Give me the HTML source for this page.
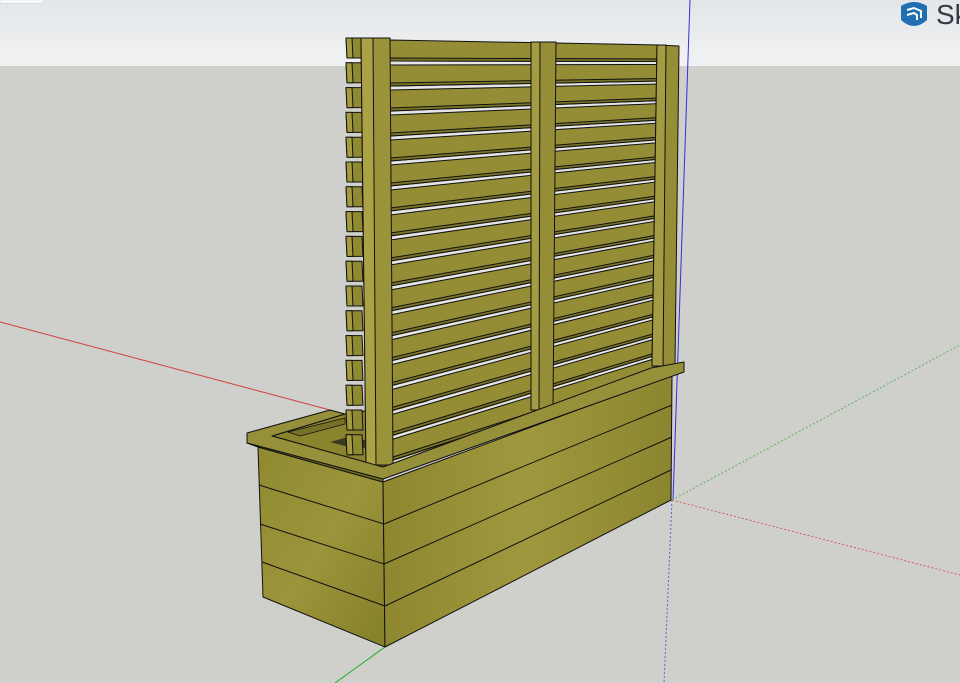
<!DOCTYPE html>
<html><head><style>
html,body{margin:0;padding:0;width:960px;height:683px;overflow:hidden;background:#cfcfcb}
svg{display:block}
</style></head><body>
<svg id="s" width="960" height="683" viewBox="0 0 960 683" xmlns="http://www.w3.org/2000/svg">
<defs>
<linearGradient id="sky" x1="0" y1="0" x2="0" y2="1"><stop offset="0" stop-color="#e3e6e9"/><stop offset="1" stop-color="#f1f2f3"/></linearGradient>
<linearGradient id="wood" x1="0" y1="0" x2="1" y2="1"><stop offset="0" stop-color="#8f8a30"/><stop offset="0.5" stop-color="#9c943a"/><stop offset="1" stop-color="#857f2a"/></linearGradient>
<linearGradient id="front" x1="0" y1="0" x2="1" y2="0"><stop offset="0" stop-color="#8e8730"/><stop offset="0.5" stop-color="#a0983e"/><stop offset="1" stop-color="#8b8530"/></linearGradient>
</defs>
<rect x="0" y="0" width="960" height="66" fill="url(#sky)"/>
<rect x="0" y="66" width="960" height="617" fill="#cfcfcb"/>
<rect x="0" y="0" width="43" height="3" fill="#fff" stroke="#ccc" stroke-width="0.5"/>
<line x1="0" y1="322" x2="330" y2="410" stroke="#d04040" stroke-width="1"/>
<line x1="690" y1="0" x2="673" y2="500" stroke="#3030e0" stroke-width="1"/>
<line x1="672" y1="500" x2="960" y2="345" stroke="#5cb85c" stroke-width="1" stroke-dasharray="2,2"/>
<line x1="672" y1="500" x2="960" y2="575" stroke="#d06060" stroke-width="1" stroke-dasharray="2,2"/>
<line x1="672" y1="500" x2="664" y2="683" stroke="#6060e0" stroke-width="1" stroke-dasharray="2,2"/>
<line x1="385" y1="647" x2="335" y2="683" stroke="#20b020" stroke-width="1"/>
<polygon points="272,436 345,414 651,368 383,467" fill="#8a842f" stroke="#111" stroke-width="1"/>
<polygon points="288,432 345,418 345,424 300,436" fill="#777128" stroke="#111" stroke-width="0.7"/>
<polygon points="330,442 348,437 365,440 365,448 345,446" fill="#3a3820"/>
<g id="trellis"></g>
<g stroke="#111" stroke-width="1" stroke-linejoin="round">
<polygon points="258,447 383,482 385,647 263,597" fill="url(#wood)"/>
<polygon points="383,482 672,375 671,500 385,647" fill="url(#front)"/>
<line x1="259" y1="485" x2="384" y2="524"/>
<line x1="260" y1="524" x2="384" y2="564"/>
<line x1="262" y1="562" x2="385" y2="606"/>
<line x1="384" y1="524" x2="672" y2="405"/>
<line x1="384" y1="564" x2="672" y2="437"/>
<line x1="385" y1="606" x2="671" y2="470"/>
<polygon points="247,433 330,410 345,414 272,436 383,467 651,368 684,362 684,372 383,479 247,443" fill="#97903a"/>
<polygon points="247,443 383,479 383,482 258,447" fill="#6f6a22"/>
</g>
<path d="M901 6 Q914 -2 927 6 L927 20 Q914 32 901 20 Z" fill="#1f6fb2"/>
<path d="M907 10 L914 8 L921 11 L921 18 M907 15 L914 13 L917 15 L917 20" stroke="#fff" stroke-width="2" fill="none"/>
<text x="936" y="24" font-family="Liberation Sans, sans-serif" font-size="28" fill="#343a44">Sk</text>
</svg>
<script>
var g=document.getElementById('trellis'),h='';
function P(pts,f){return '<polygon points="'+pts+'" fill="'+f+'" stroke="#111" stroke-width="1" stroke-linejoin="round"/>';}
for(var i=0;i<17;i++){
 var lt=40+i*25,rt=45+i*19.5,lb=lt+21,rb=rt+16.5;
 h+=P('390,'+lt+' 660,'+rt+' 660,'+rb+' 390,'+lb,'#948d36');
 h+=P('390,'+(lb-3)+' 660,'+(rb-2.5)+' 660,'+rb+' 390,'+lb,'#7a7426');
 h+='<polygon points="390,'+(lb+1)+' 660,'+(rb+1)+' 660,'+(rb+3)+' 390,'+(lb+4)+'" fill="#e6e6e6"/>';
 var y=38+i*24.8;
 h+=P('346,'+y+' 362,'+y+' 363,'+(y+20)+' 347,'+(y+20),'#8f8932');
 h+=P('346,'+y+' 352,'+y+' 353,'+(y+20)+' 347,'+(y+20),'#a39b40');
}
h+=P('361,38 390,38 393,465 366,465','#9a933a');
h+=P('361,38 373,38 376,465 366,465','#aaa245');
h+=P('531,42 556,42 553,410 531,410','#958e37');
h+=P('531,42 540,42 539,410 531,410','#a49c42');
h+=P('657,45 679,46 675,365 652,366','#958e37');
h+=P('657,45 666,45 663,366 652,366','#a49c42');
g.innerHTML=h;
</script>
</body></html>
